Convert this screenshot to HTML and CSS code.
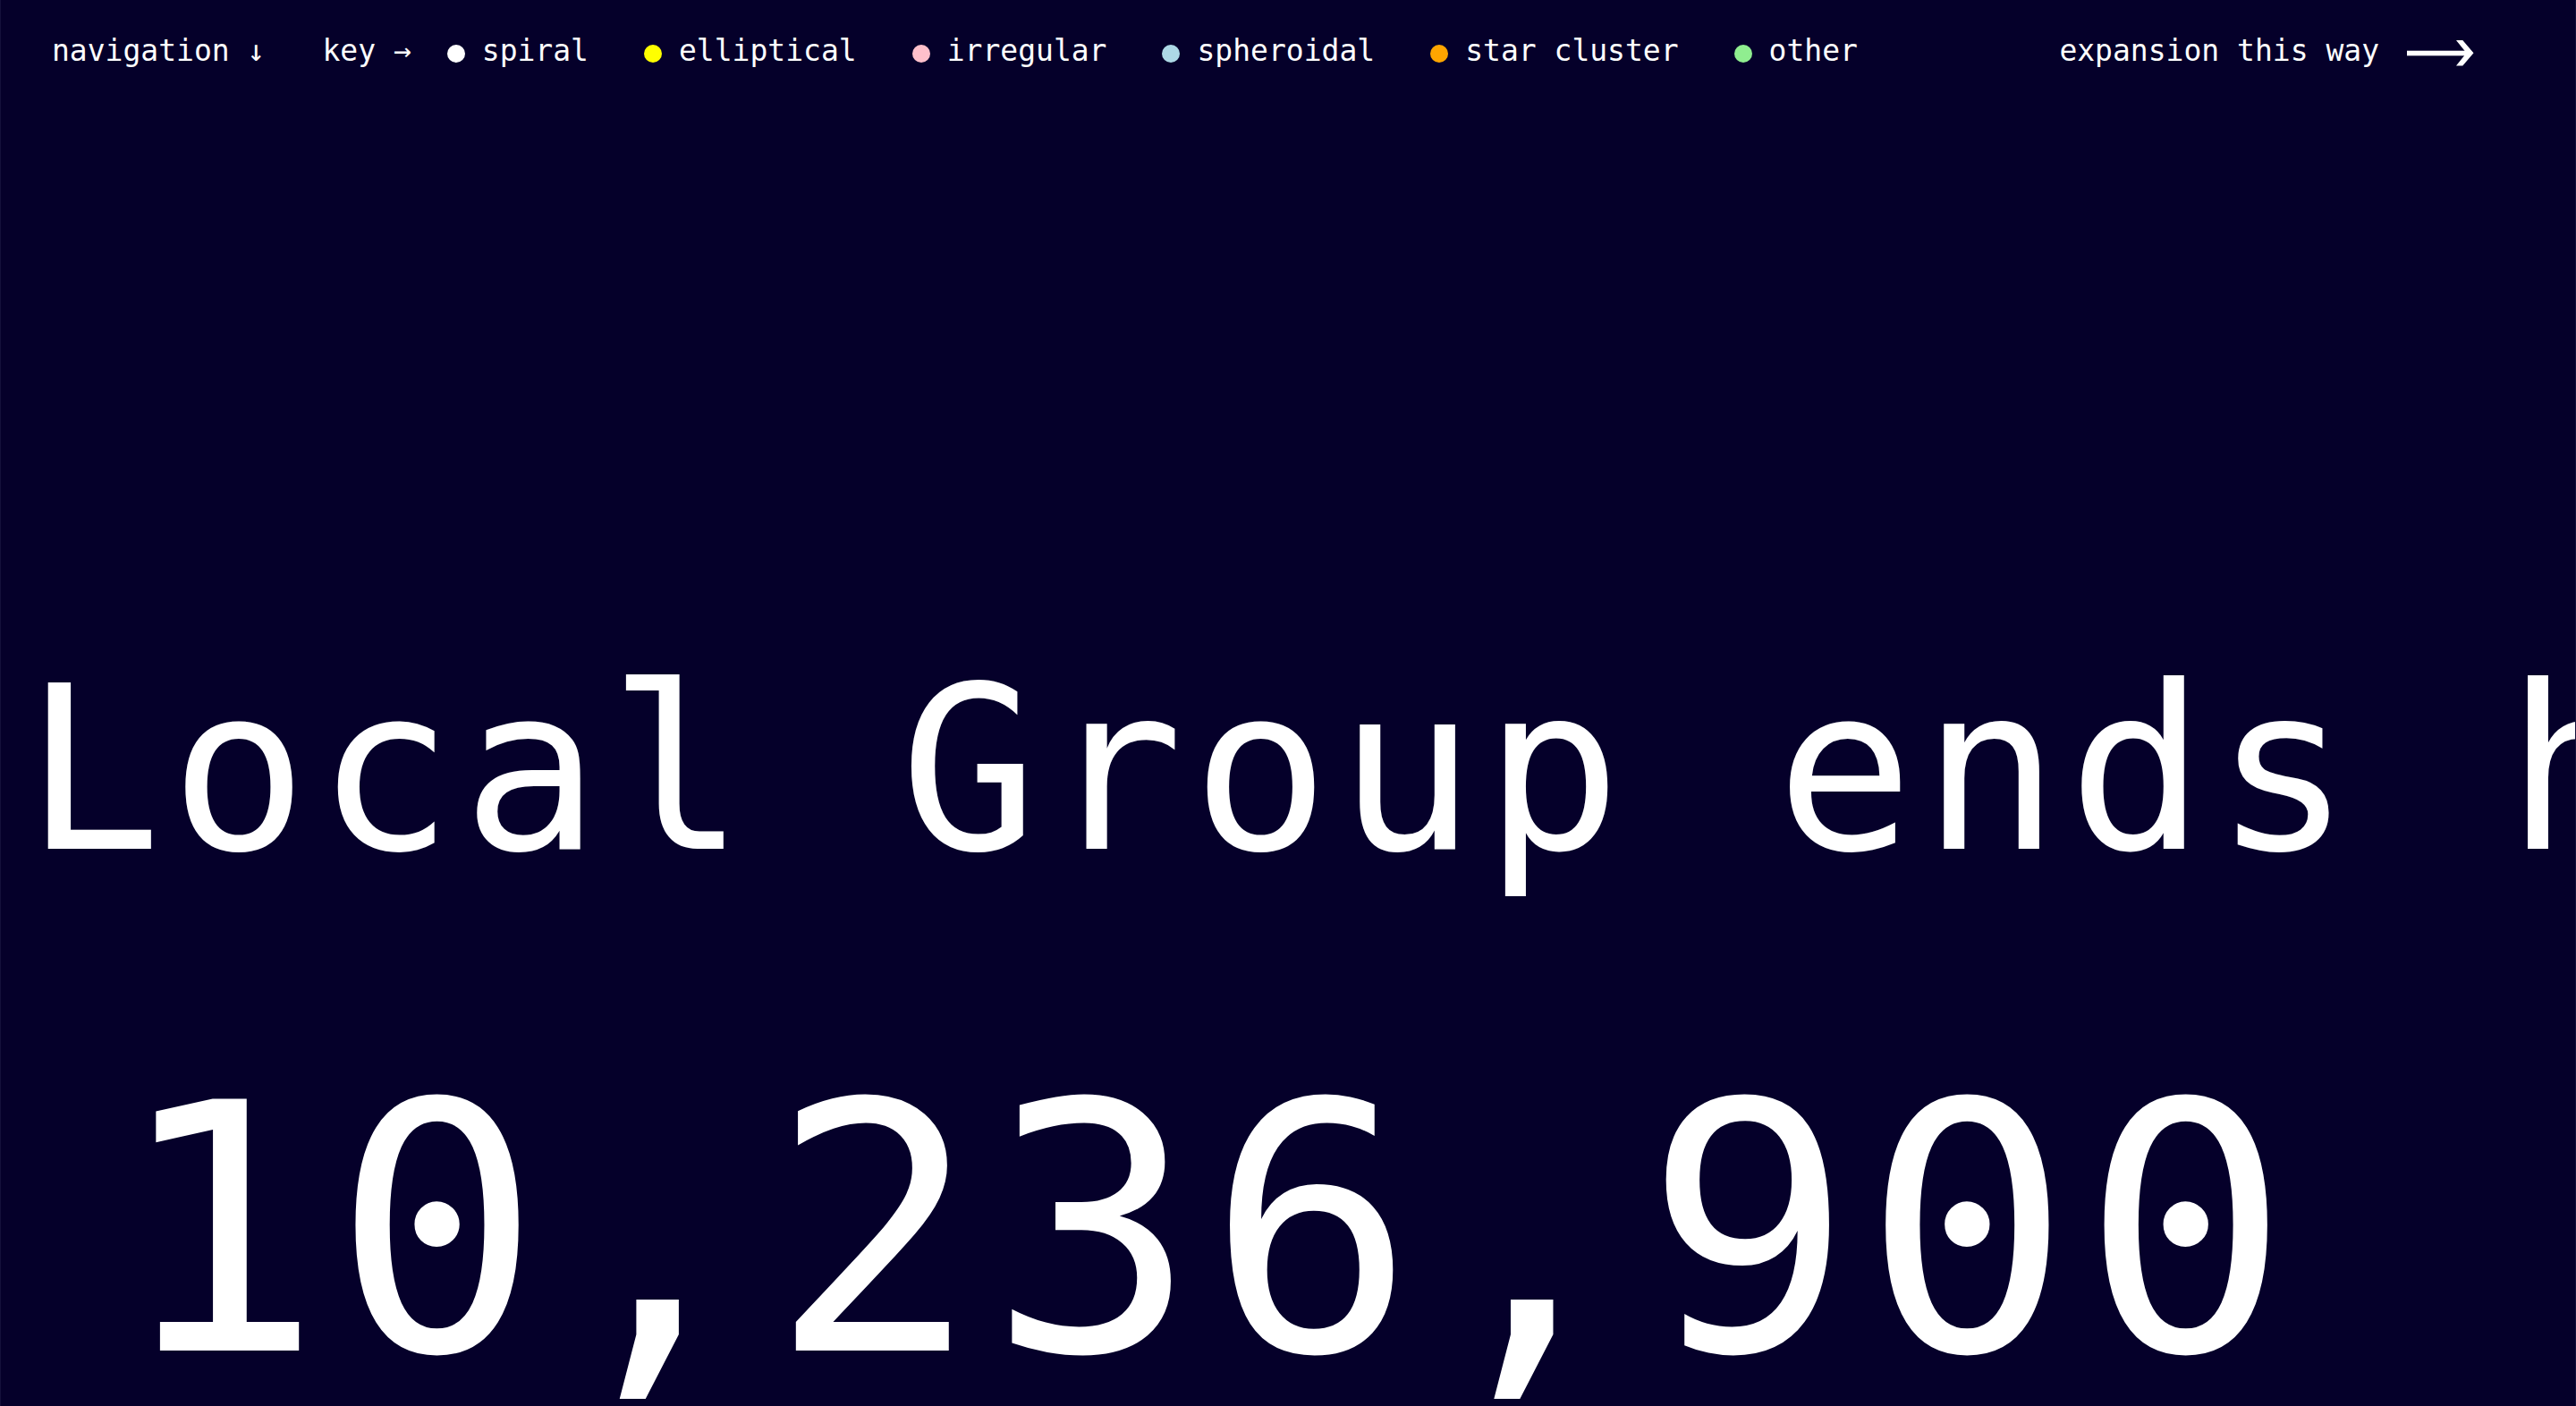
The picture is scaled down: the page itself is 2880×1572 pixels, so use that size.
FILE: index.html
```html
<!DOCTYPE html>
<html lang="en">
<head>
<meta charset="utf-8">
<title>Local Group ends here</title>
<link rel="stylesheet" href="styles.css">
</head>
<body>
<div class="page">
  <header class="topbar">
    <div class="nav">navigation ↓</div>
    <div class="key">
      <span class="key-label">key →</span>
      <ul class="legend">
        <li class="legend-item"><span class="dot dot-spiral"></span>spiral</li>
        <li class="legend-item"><span class="dot dot-elliptical"></span>elliptical</li>
        <li class="legend-item"><span class="dot dot-irregular"></span>irregular</li>
        <li class="legend-item"><span class="dot dot-spheroidal"></span>spheroidal</li>
        <li class="legend-item"><span class="dot dot-cluster"></span>star cluster</li>
        <li class="legend-item"><span class="dot dot-other"></span>other</li>
      </ul>
    </div>
    <div class="expansion">
      <span>expansion this way</span>
      <svg class="long-arrow" width="75" height="29" viewBox="0 0 75 29" aria-hidden="true">
        <rect x="0" y="11.7" width="69" height="5.6" fill="#fff"/>
        <polygon points="55,0 62.3,0 74.5,14.3 62.3,28.6 55,28.6 66.5,14.3" fill="#fff"/>
      </svg>
    </div>
  </header>
  <main class="stage">
    <h1 class="headline">Local Group ends here</h1>
    <p class="distance">10,236,900</p>
  </main>
</div>
</body>
</html>
```

FILE: styles.css
```css
html, body {
  margin: 0;
  padding: 0;
  height: 100%;
  background: #05002a;
}

body {
  color: #ffffff;
  font-family: "DejaVu Sans Mono", "Liberation Mono", monospace;
  overflow: hidden;
}

.page {
  height: 100vh;
  box-sizing: border-box;
  border-left: 1px solid #14113a;
  border-right: 1px solid #14113a;
  overflow: hidden;
}

.topbar {
  display: flex;
  align-items: center;
  padding: 37px 113px 0 57px;
  font-size: 33px;
  line-height: 40px;
  white-space: nowrap;
}

.nav {
  margin-right: 64px;
}

.key {
  display: flex;
  align-items: center;
}

.key-label {
  margin-right: 40px;
}

.legend {
  display: flex;
  align-items: center;
  gap: 62px;
  margin: 0;
  padding: 0;
  list-style: none;
}

.legend-item {
  display: flex;
  align-items: center;
}

.dot {
  width: 20px;
  height: 20px;
  border-radius: 50%;
  margin: 6px 19px 0 0;
  flex: none;
}

.dot-spiral { background: #ffffff; }
.dot-elliptical { background: #ffff00; }
.dot-irregular { background: #ffc0cb; }
.dot-spheroidal { background: #add8e6; }
.dot-cluster { background: #ffa500; }
.dot-other { background: #90ee90; }

.expansion {
  margin-left: auto;
  display: flex;
  align-items: center;
  gap: 31px;
}

.long-arrow {
  display: block;
  margin-top: 4px;
}

.stage {
  display: flex;
  flex-direction: column;
}

.headline {
  margin: 656px 0 0 0;
  padding-left: 26px;
  font-size: 255px;
  font-weight: normal;
  line-height: 255px;
  letter-spacing: 9.7px;
  white-space: nowrap;
}

.distance {
  margin: 196px 0 0 0;
  padding-left: 127px;
  font-size: 386px;
  line-height: 386px;
  letter-spacing: 12px;
  white-space: nowrap;
}
```
